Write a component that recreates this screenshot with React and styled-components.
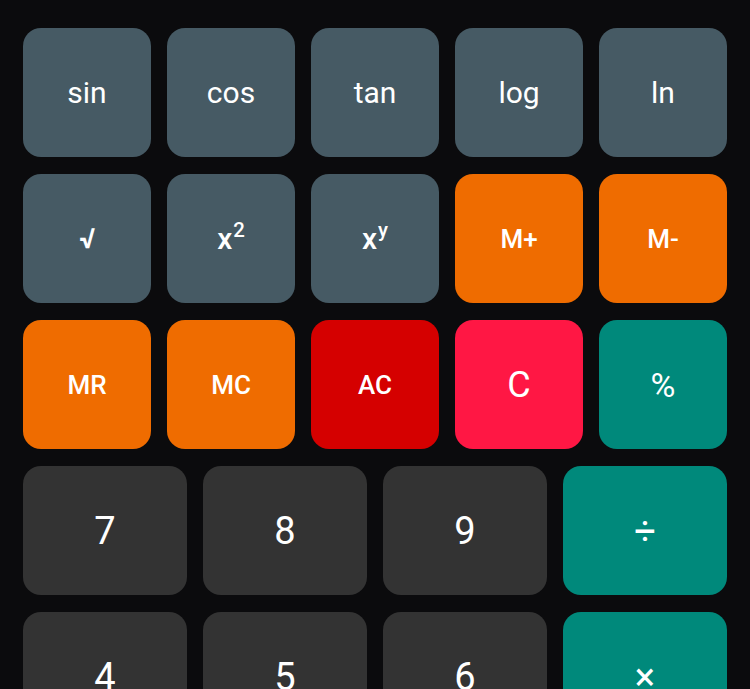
import styled, { createGlobalStyle } from "styled-components";

const GlobalStyle = createGlobalStyle`
  html, body {
    margin: 0;
    padding: 0;
    background: #0b0b0d;
    overflow: hidden;
    font-family: Roboto, "Liberation Sans", sans-serif;
  }
`;

const Pad = styled.div`
  display: flex;
  flex-direction: column;
  gap: 17px;
  padding: 28px 23px;
  box-sizing: border-box;
  width: 750px;
`;

const SciGrid = styled.div`
  display: grid;
  grid-template-columns: repeat(5, 128px);
  grid-auto-rows: 129px;
  column-gap: 16px;
  row-gap: 17px;
`;

const NumGrid = styled.div`
  display: grid;
  grid-template-columns: repeat(4, 164px);
  grid-auto-rows: 129px;
  column-gap: 16px;
  row-gap: 17px;
`;

const Key = styled.button`
  display: flex;
  align-items: center;
  justify-content: center;
  border: none;
  border-radius: 18px;
  background: ${(p) => p.$bg};
  color: #ffffff;
  font-family: Roboto, "Liberation Sans", sans-serif;
  font-size: ${(p) => p.$size}px;
  font-weight: ${(p) => p.$weight};
  padding: 0;
  cursor: pointer;
`;

const Sup = styled.span`
  font-size: 0.68em;
  position: relative;
  top: -0.42em;
  margin-left: 1px;
`;

const COLORS = {
  fn: "#465a64",
  mem: "#ef6c00",
  clearAll: "#d50000",
  clear: "#ff1744",
  op: "#00897b",
  num: "#333333",
};

const sciKeys = [
  { label: "sin", kind: "fn" },
  { label: "cos", kind: "fn" },
  { label: "tan", kind: "fn" },
  { label: "log", kind: "fn" },
  { label: "ln", kind: "fn" },
  { label: "√", kind: "fn", size: 28, weight: 700 },
  { label: "x", sup: "2", kind: "fn", size: 30, weight: 500 },
  { label: "x", sup: "y", kind: "fn", size: 30, weight: 500 },
  { label: "M+", kind: "mem", size: 26, weight: 500 },
  { label: "M-", kind: "mem", size: 26, weight: 500 },
  { label: "MR", kind: "mem", size: 26, weight: 500 },
  { label: "MC", kind: "mem", size: 26, weight: 500 },
  { label: "AC", kind: "clearAll", size: 26, weight: 500 },
  { label: "C", kind: "clear", size: 36 },
  { label: "%", kind: "op", size: 34 },
];

const numKeys = [
  { label: "7", kind: "num" },
  { label: "8", kind: "num" },
  { label: "9", kind: "num" },
  { label: "÷", kind: "op" },
  { label: "4", kind: "num" },
  { label: "5", kind: "num" },
  { label: "6", kind: "num" },
  { label: "×", kind: "op" },
];

function App() {
  return (
    <>
      <GlobalStyle />
      <Pad>
        <SciGrid>
          {sciKeys.map((k, i) => (
            <Key key={i} $bg={COLORS[k.kind]} $size={k.size || 30} $weight={k.weight || 400}>
              {k.label}
              {k.sup && <Sup>{k.sup}</Sup>}
            </Key>
          ))}
        </SciGrid>
        <NumGrid>
          {numKeys.map((k, i) => (
            <Key key={i} $bg={COLORS[k.kind]} $size={38} $weight={400}>
              {k.label}
            </Key>
          ))}
        </NumGrid>
      </Pad>
    </>
  );
}

export default App;
